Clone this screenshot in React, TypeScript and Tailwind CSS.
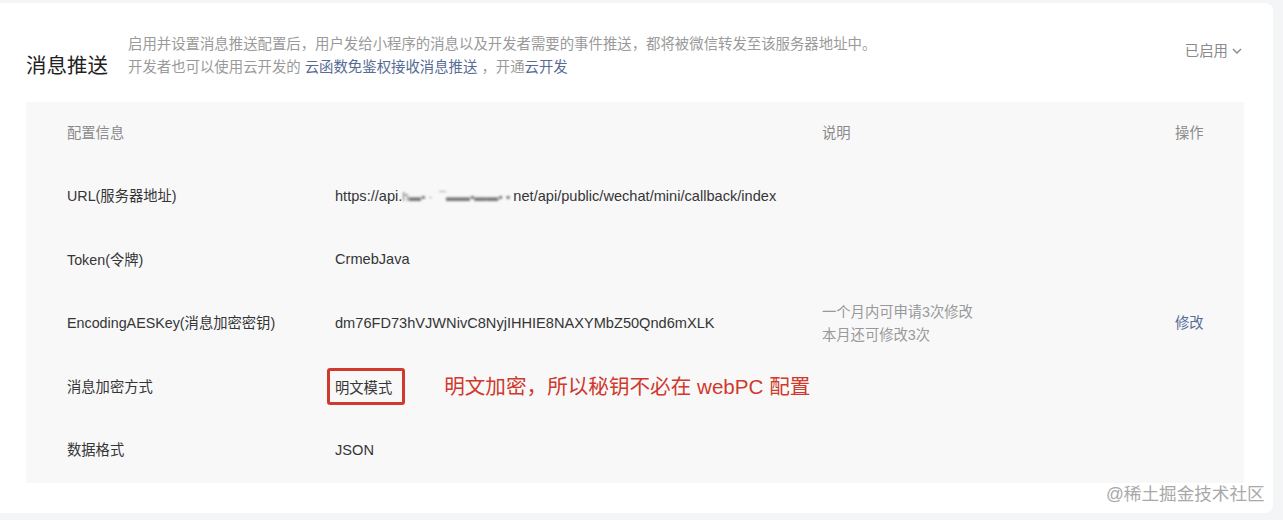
import React from "react";

const font = { fontFamily: '"Liberation Sans", "Noto Sans CJK SC", sans-serif' };

function Row({ label, value, desc, action }: { label: React.ReactNode; value: React.ReactNode; desc?: React.ReactNode; action?: React.ReactNode }) {
  return (
    <div className="grid grid-cols-[268px_487px_353px_1fr] h-[63.6px] items-center text-[14.3px] text-[#353535]">
      <div>{label}</div>
      <div className="flex items-center text-[14.6px]">{value}</div>
      <div className="text-[#999] text-[14.3px] leading-[23px]">{desc}</div>
      <div className="text-[#576b95]">{action}</div>
    </div>
  );
}

export default function App() {
  return (
    <div className="relative w-[1283px] h-[520px] bg-[#f4f5f7] overflow-hidden" style={font}>
      <div className="ml-0 mt-[3px] w-[1273px] h-[510px] bg-white rounded-r-[8px]">
        <div className="flex items-start h-[99px] pt-[30px] pl-[26px] pr-[30px]">
          <div className="mt-[18px] text-[20.5px] leading-[30px] text-[#222] w-[102px] shrink-0">消息推送</div>
          <div className="text-[14.4px] leading-[23px] text-[#9a9a9a]">
            <div>启用并设置消息推送配置后，用户发给小程序的消息以及开发者需要的事件推送，都将被微信转发至该服务器地址中。</div>
            <div>
              开发者也可以使用云开发的 <span className="text-[#576b95]">云函数免鉴权接收消息推送</span> ，开通<span className="text-[#576b95]">云开发</span>
            </div>
          </div>
          <div className="ml-auto mt-[8px] flex items-center gap-[3px] text-[14.4px] leading-[20px] text-[#8a8a8a]">
            <span>已启用</span>
            <svg width="12" height="12" viewBox="0 0 12 12" fill="none" stroke="#8a8a8a" strokeWidth="1.4">
              <path d="M2 4l4 4 4-4" />
            </svg>
          </div>
        </div>
        <div className="ml-[26px] w-[1218px] h-[381px] bg-[#f8f8f9] pl-[41px]">
          <div className="grid grid-cols-[268px_487px_353px_1fr] h-[63px] items-center text-[14.3px] text-[#8a8a8a]">
            <div>配置信息</div>
            <div></div>
            <div>说明</div>
            <div>操作</div>
          </div>
          <Row
            label="URL(服务器地址)"
            value={
              <span className="flex items-center whitespace-nowrap">
                <span>https://api.</span>
                <span className="inline-block w-[111px] overflow-hidden blur-[1px] text-[#777] text-[12px] whitespace-nowrap">h▬▪ ·&nbsp;&nbsp;¯▬▬▪▬▬▪ ▪</span>
                <span>net/api/public/wechat/mini/callback/index</span>
              </span>
            }
          />
          <Row label="Token(令牌)" value="CrmebJava" />
          <Row
            label="EncodingAESKey(消息加密密钥)"
            value="dm76FD73hVJWNivC8NyjIHHIE8NAXYMbZ50Qnd6mXLK"
            desc={
              <div>
                <div>一个月内可申请3次修改</div>
                <div>本月还可修改3次</div>
              </div>
            }
            action="修改"
          />
          <Row
            label="消息加密方式"
            value={
              <>
                <span className="relative inline-block leading-[20px] text-[14.3px]">
                  明文模式
                  <span className="absolute -left-[8px] -right-[13px] -top-[10px] -bottom-[7px] border-[3px] border-[#cf3a2c] rounded-[3px]"></span>
                </span>
                <span className="ml-[52px] text-[20.6px] text-[#d0392c] whitespace-nowrap">明文加密，所以秘钥不必在 webPC 配置</span>
              </>
            }
          />
          <Row label="数据格式" value="JSON" />
        </div>
      </div>
      <div className="absolute left-[1106px] top-[483px] text-[17.6px] leading-[22px] text-[#a9a9a9] whitespace-nowrap">@稀土掘金技术社区</div>
    </div>
  );
}
